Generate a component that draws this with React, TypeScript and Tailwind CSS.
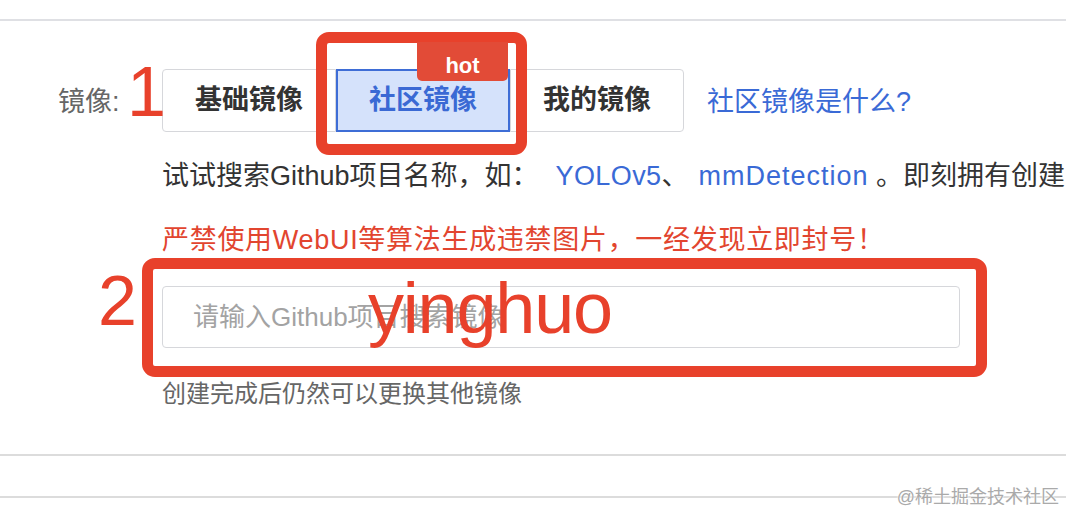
import { FC } from "react";

const options = [
  { key: "base", label: "基础镜像" },
  { key: "community", label: "社区镜像" },
  { key: "mine", label: "我的镜像" },
];

const MirrorTabs: FC<{ selected: string }> = ({ selected }) => {
  return (
    <div className="flex">
      {options.map((opt, i) => {
        const active = opt.key === selected;
        const edge =
          i === 0 ? "rounded-l-[4px]" : i === options.length - 1 ? "rounded-r-[4px]" : "";
        return (
          <button
            key={opt.key}
            className={
              active
                ? "relative w-[174px] h-[63px] flex items-center justify-center border-2 border-[#3e6dd6] bg-[#d5e2fb] text-[#3a69d4] font-bold text-[27px] z-10"
                : `relative w-[174px] h-[63px] flex items-center justify-center border-[1.5px] border-[#d6d7db] bg-white text-[#333] font-bold text-[27px] ${edge}`
            }
          >
            {active && (
              <span className="absolute right-0 top-[-29px] w-[91px] h-[39px] rounded-b-[5px] bg-[#e24b37] text-white text-[22px] font-bold flex items-end justify-center pb-[4px] leading-none">
                hot
              </span>
            )}
            {opt.label}
          </button>
        );
      })}
    </div>
  );
};

const App: FC = () => {
  return (
    <div
      className="relative w-[1066px] h-[514px] bg-white overflow-hidden"
      style={{ fontFamily: '"Liberation Sans", "Noto Sans CJK SC", sans-serif' }}
    >
      <div className="h-[2px] mt-[19px] bg-[#dfe0e4]" />

      {/* mirror selector */}
      <div className="flex items-center mt-[48px] pl-[58px]">
        <span className="w-[104px] text-[27px] text-[#666] mt-[3px]">镜像:</span>
        <MirrorTabs selected="community" />
        <a className="ml-[23px] text-[27px] text-[#3a6ad6] mt-[3px]">社区镜像是什么?</a>
      </div>

      <div className="pl-[162px]">
        <p className="mt-[26px] h-[36px] leading-[36px] text-[27px] text-[#333] whitespace-nowrap overflow-hidden">
          试试搜索Github项目名称，如：<span className="text-[#3a6ad6] ml-[17px] tracking-[0.4px]">YOLOv5</span>、
          <span className="text-[#3a6ad6] ml-[10px] tracking-[1px]">mmDetection</span> 。即刻拥有创建
        </p>
        <p className="mt-[28px] h-[36px] leading-[36px] text-[27px] text-[#e2452f] whitespace-nowrap tracking-[0.7px]">
          严禁使用WebUI等算法生成违禁图片，一经发现立即封号！
        </p>
        <input
          className="mt-[28px] block w-[798px] h-[62px] rounded-[4px] border-[1.5px] border-[#d6d7db] pl-[30px] text-[26px] outline-none placeholder:text-[#a3a3a3]"
          placeholder="请输入Github项目搜索镜像"
        />
        <p className="mt-[30px] h-[32px] leading-[32px] text-[24px] text-[#666]">
          创建完成后仍然可以更换其他镜像
        </p>
      </div>

      <div className="h-[2px] mt-[44px] bg-[#dcdcdc]" />
      <div className="h-[2px] mt-[40px] bg-[#dcdcdc]" />

      {/* annotations */}
      <div className="absolute left-[316px] top-[32px] w-[211px] h-[123px] border-[11px] border-[#e8412b] rounded-[13px]" />
      <div className="absolute left-[142px] top-[258px] w-[845px] h-[119px] border-[11px] border-[#e8412b] rounded-[13px]" />
      <span className="absolute left-[127px] top-[57px] text-[70px] leading-[70px] text-[#e8412b]">1</span>
      <span className="absolute left-[98px] top-[266px] text-[70px] leading-[70px] text-[#e8412b]">2</span>
      <span className="absolute left-[368px] top-[272px] text-[72px] leading-[72px] tracking-[-1.2px] text-[#e8412b]">
        yinghuo
      </span>
      <span className="absolute right-[7px] top-[485px] text-[18px] leading-[24px] text-[#aaa] [text-shadow:0_0_2px_#fff,0_0_2px_#fff]">
        @稀土掘金技术社区
      </span>
    </div>
  );
};

export default App;
